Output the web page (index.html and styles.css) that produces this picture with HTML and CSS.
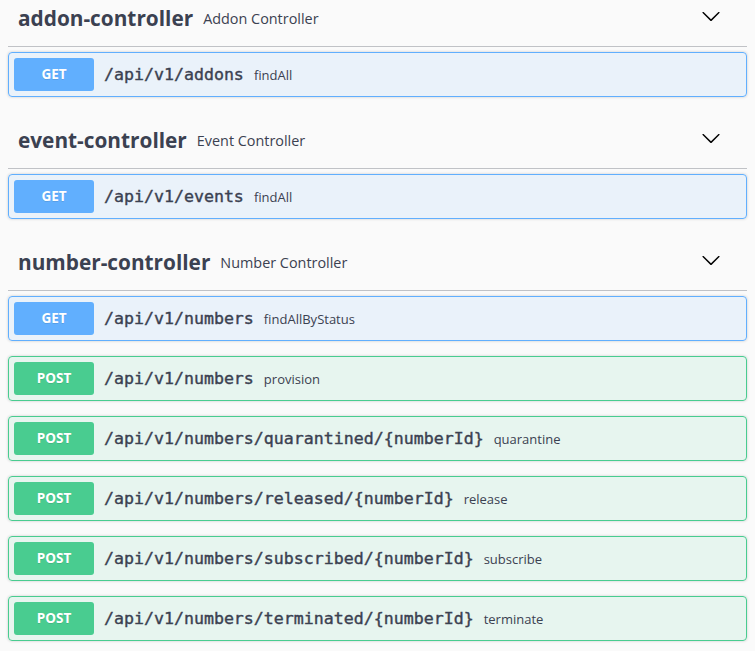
FILE: index.html
```html
<!DOCTYPE html>
<html lang="en">
<head>
<meta charset="utf-8">
<title>Swagger UI</title>
<link rel="stylesheet" href="styles.css">
</head>
<body>
<div class="wrap">
  <section class="tag-section">
    <h4 class="tag">
      <span class="tag-name">addon-controller</span>
      <small class="tag-desc">Addon Controller</small>
      <button class="expand" aria-label="collapse"><svg width="20" height="20" viewBox="0 0 20 20"><path d="M17.418 6.109c.272-.268.709-.268.979 0s.271.701 0 .969l-7.908 7.83c-.27.268-.707.268-.979 0l-7.908-7.830c-.27-.268-.27-.701 0-.969.271-.268.709-.268.979 0L10 13.25l7.418-7.141z"/></svg></button>
    </h4>
    <div class="ops">
      <div class="opblock get"><span class="method">GET</span><span class="path">/api/v1/addons</span><span class="desc">findAll</span></div>
    </div>
  </section>

  <section class="tag-section">
    <h4 class="tag">
      <span class="tag-name">event-controller</span>
      <small class="tag-desc">Event Controller</small>
      <button class="expand" aria-label="collapse"><svg width="20" height="20" viewBox="0 0 20 20"><path d="M17.418 6.109c.272-.268.709-.268.979 0s.271.701 0 .969l-7.908 7.83c-.27.268-.707.268-.979 0l-7.908-7.83c-.27-.268-.27-.701 0-.969.271-.268.709-.268.979 0L10 13.25l7.418-7.141z"/></svg></button>
    </h4>
    <div class="ops">
      <div class="opblock get"><span class="method">GET</span><span class="path">/api/v1/events</span><span class="desc">findAll</span></div>
    </div>
  </section>

  <section class="tag-section">
    <h4 class="tag">
      <span class="tag-name">number-controller</span>
      <small class="tag-desc">Number Controller</small>
      <button class="expand" aria-label="collapse"><svg width="20" height="20" viewBox="0 0 20 20"><path d="M17.418 6.109c.272-.268.709-.268.979 0s.271.701 0 .969l-7.908 7.83c-.27.268-.707.268-.979 0l-7.908-7.83c-.27-.268-.27-.701 0-.969.271-.268.709-.268.979 0L10 13.25l7.418-7.141z"/></svg></button>
    </h4>
    <div class="ops">
      <div class="opblock get"><span class="method">GET</span><span class="path">/api/v1/numbers</span><span class="desc">findAllByStatus</span></div>
      <div class="opblock post"><span class="method">POST</span><span class="path">/api/v1/numbers</span><span class="desc">provision</span></div>
      <div class="opblock post"><span class="method">POST</span><span class="path">/api/v1/numbers/quarantined/{numberId}</span><span class="desc">quarantine</span></div>
      <div class="opblock post"><span class="method">POST</span><span class="path">/api/v1/numbers/released/{numberId}</span><span class="desc">release</span></div>
      <div class="opblock post"><span class="method">POST</span><span class="path">/api/v1/numbers/subscribed/{numberId}</span><span class="desc">subscribe</span></div>
      <div class="opblock post"><span class="method">POST</span><span class="path">/api/v1/numbers/terminated/{numberId}</span><span class="desc">terminate</span></div>
    </div>
  </section>
</div>
</body>
</html>
```

FILE: styles.css
```css
html, body {
  margin: 0;
  padding: 0;
  background: #fafafa;
  color: #3b4151;
  font-family: "Open Sans", "Noto Sans", sans-serif;
}

.wrap {
  margin-top: -10px;
  padding: 0 8px;
}

.tag-section {
  display: flex;
  flex-direction: column;
}

.tag {
  display: flex;
  align-items: center;
  margin: 0 0 5px;
  padding: 10px 20px 10px 10px;
  border-bottom: 1px solid rgba(59, 65, 81, 0.3);
  height: 36px;
  box-sizing: content-box;
}

.tag-name {
  font-family: "Open Sans", sans-serif;
  font-size: 20.8px;
  font-weight: 700;
  line-height: 36px;
  color: #3b4151;
}

.tag-desc {
  flex: 1;
  padding: 0 10px;
  font-size: 14.4px;
  font-weight: 400;
  color: #3b4151;
}

.expand {
  border: none;
  background: none;
  padding: 0 6px 0 0;
  margin: 0 0 5px;
  display: flex;
  cursor: pointer;
}

.expand svg {
  fill: #000;
}

.ops {
  display: flex;
  flex-direction: column;
}

.opblock {
  display: flex;
  align-items: center;
  margin: 0 0 15px;
  padding: 5px;
  border: 1px solid #000;
  border-radius: 4px;
  box-shadow: 0 0 3px rgba(0, 0, 0, 0.19);
}

.opblock.get {
  border-color: #61affe;
  background: rgba(97, 175, 254, 0.1);
}

.opblock.post {
  border-color: #49cc90;
  background: rgba(73, 204, 144, 0.1);
}

.method {
  min-width: 80px;
  padding: 6px 0;
  line-height: 21px;
  text-align: center;
  font-size: 13.5px;
  font-weight: 700;
  color: #fff;
  border-radius: 3px;
  text-shadow: 0 1px 0 rgba(0, 0, 0, 0.1);
}

.get .method { background: #61affe; }
.post .method { background: #49cc90; }

.path {
  padding: 0 10px;
  font-family: "DejaVu Sans Mono", monospace;
  font-size: 16.6px;
  font-weight: 400;
  -webkit-text-stroke: 0.4px #3b4151;
  color: #3b4151;
}

.desc {
  flex: 1;
  font-size: 13px;
  color: #3b4151;
}
```
